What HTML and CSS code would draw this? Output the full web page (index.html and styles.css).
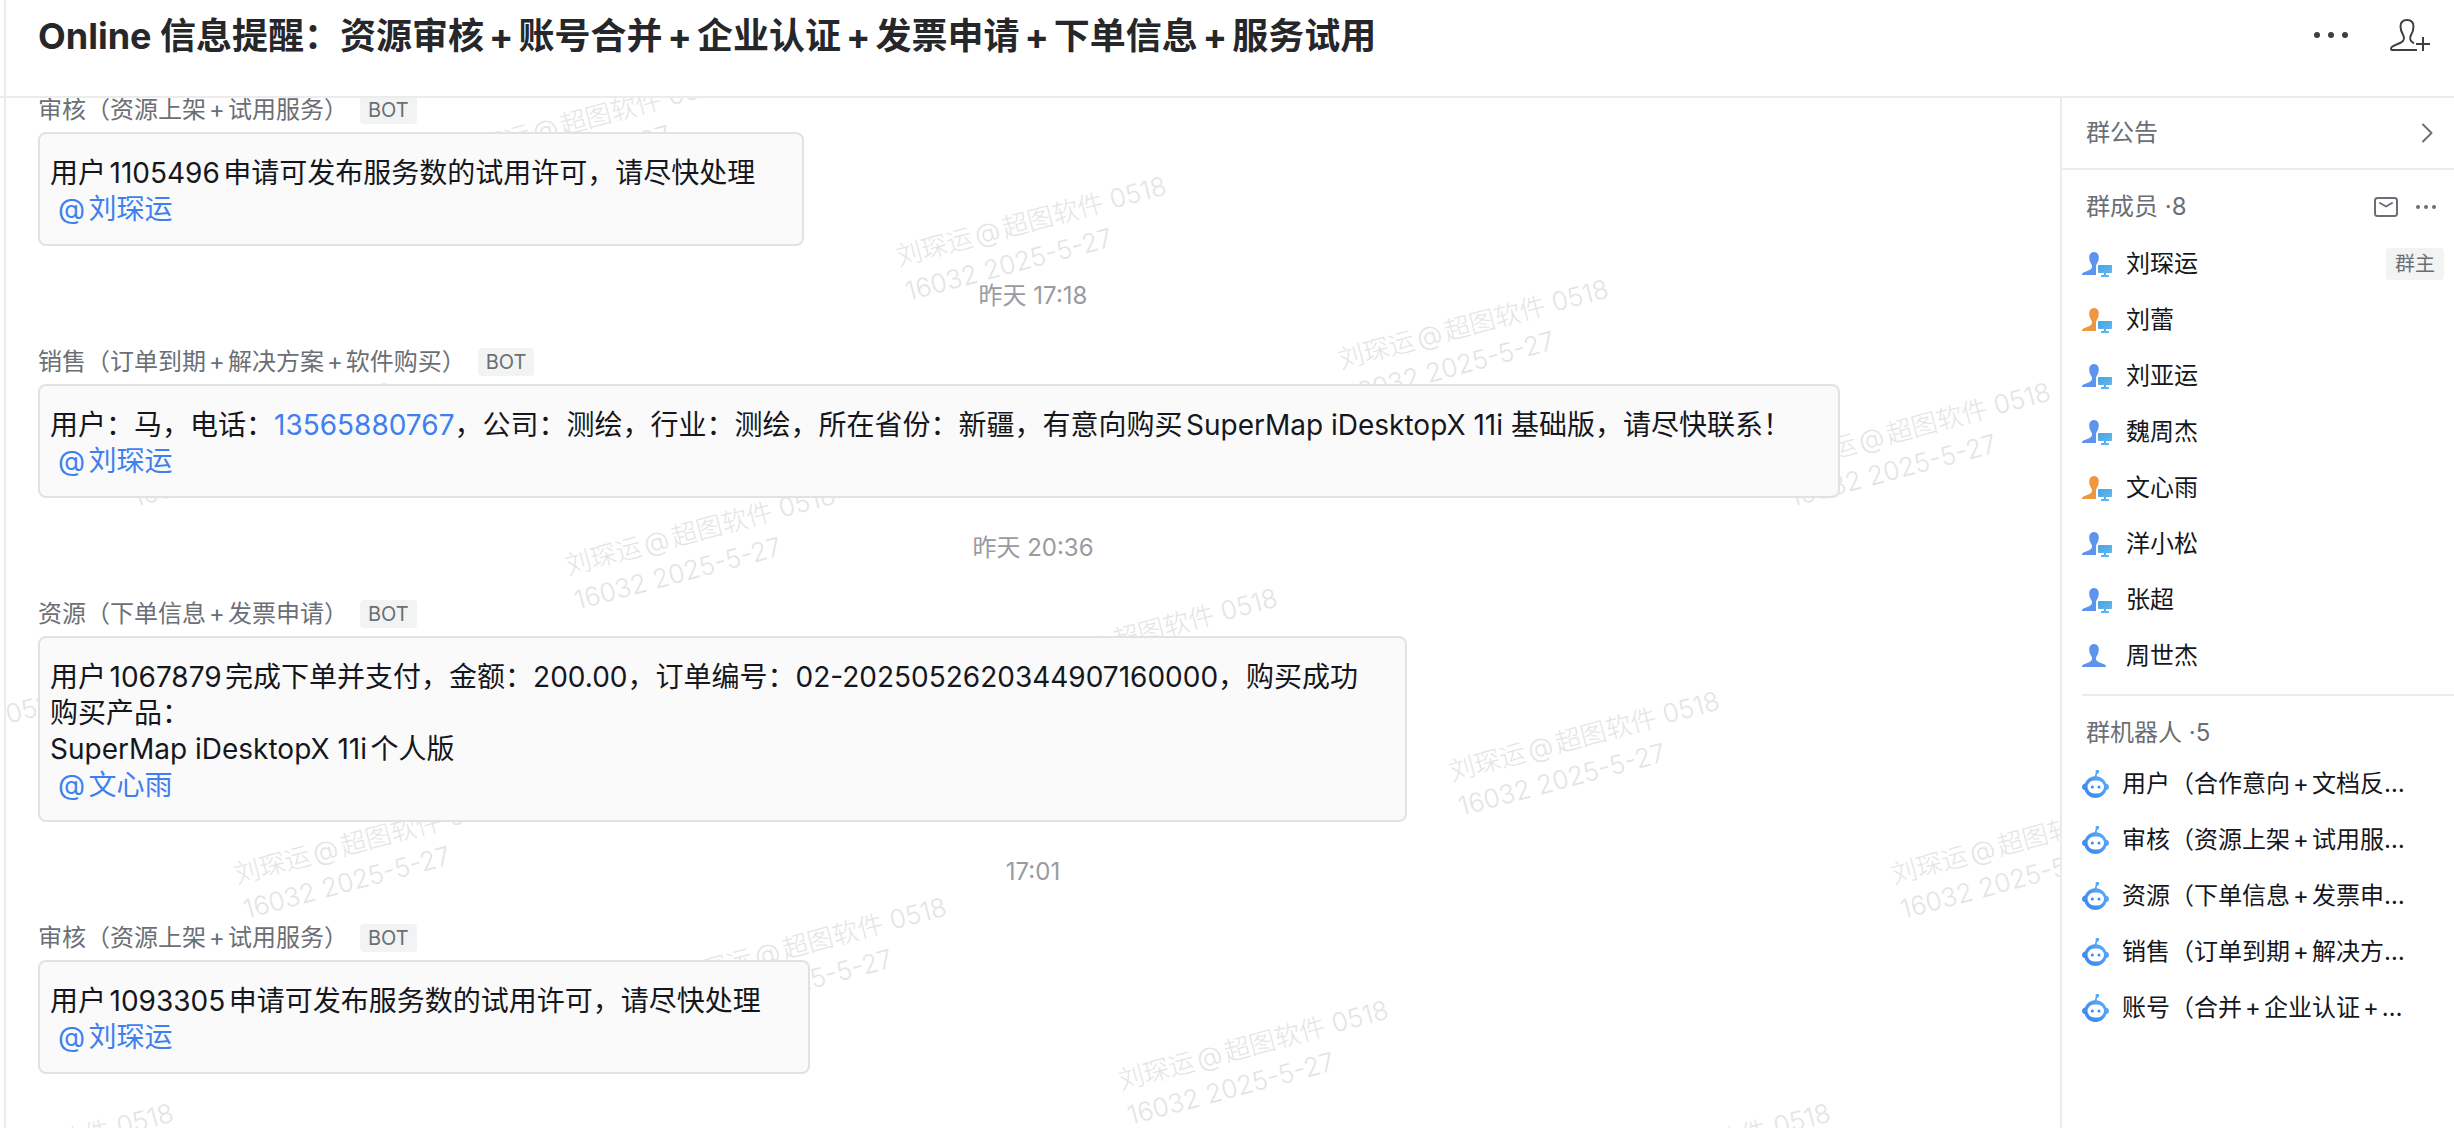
FILE: index.html
```html
<!DOCTYPE html>
<html lang="zh-CN">
<head>
  <meta charset="UTF-8">
  <title>Online 信息提醒</title>
  <link rel="stylesheet" href="styles.css">
</head>
<body>
  <!-- shared icons -->
  <svg class="defs" aria-hidden="true">
    <defs>
      <linearGradient id="botFill" x1="1" y1="0" x2="0" y2="1">
        <stop offset="0" stop-color="#66b6f6"/>
        <stop offset="1" stop-color="#3580ee"/>
      </linearGradient>
      <linearGradient id="pcFill" x1="0" y1="0" x2="1" y2="1">
        <stop offset="0" stop-color="#4aa3e3"/>
        <stop offset="1" stop-color="#63bbf3"/>
      </linearGradient>
    </defs>
    <symbol id="online" viewBox="0 0 30 25">
      <path fill="currentColor" d="M0 23C0 21.2.5 20.9 2 20.2L7 18.2C9.6 17 10.2 16 10 13.8C9.8 12.4 8.4 11.4 7.8 9C7 6 7 4.5 7.6 3C8.4 1 10 0 12 0s3.6 1 4.4 3c.6 1.5.6 3-.2 6C15.600 11.400 14 12.500 14 14V23Z"/>
      <path fill="url(#pcFill)" d="M17 13H29Q30 13 30 14V20Q30 21 29 21H24V23H27V25H19V23H22V21H17Q16 21 16 20V14Q16 13 17 13Z"/>
    </symbol>
    <symbol id="offline" viewBox="0 0 30 25">
      <path fill="currentColor" d="M0 23C0 21.200.5 20.900 2 20.200L7 18.200C9.600 17 10.200 16 10 13.800C9.800 12.400 8.400 11.400 7.800 9C7 6 7 4.500 7.600 3C8.400 1 10 0 12 0s3.600 1 4.400 3c.6 1.500.6 3-.2 6C15.600 11.400 14.200 12.400 14 13.800C13.800 16 14.400 17 17 18.200L22 20.200C23.500 20.900 24 21.200 24 23Z"/>
    </symbol>
    <symbol id="bot" viewBox="0 0 27 28">
      <path fill="url(#botFill)" d="M12.600 6.200L13.900 2.600A1.800 1.800 0 1 1 15.500 3.400L14.500 6.300C19 6.700 22.700 9.500 24 13.600C26 14.200 27 15.500 27 17S26 19.800 24.300 20.300C22.600 25 18.500 28 13.500 28S4.400 25 2.700 20.300C1 19.800 0 18.500 0 17S1 14.200 3 13.600C4.400 9.500 8 6.700 12.600 6.200Z"/>
      <rect x="5.500" y="10.500" width="16.500" height="13" rx="6.500" fill="#fff"/>
      <circle cx="10.300" cy="17" r="1.500" fill="#3d8bf0"/>
      <circle cx="17" cy="17" r="1.500" fill="#3d8bf0"/>
    </symbol>
  </svg>

  <div class="app">
    <header class="topbar">
      <h1 class="title">Online 信息提醒：资源审核<i>+</i>账号合并<i>+</i>企业认证<i>+</i>发票申请<i>+</i>下单信息<i>+</i>服务试用</h1>
      <div class="tools">
        <button class="icon-btn" aria-label="更多">
          <svg width="34" height="6" viewBox="0 0 34 6" fill="#3c3f44"><circle cx="3" cy="3" r="3"/><circle cx="17" cy="3" r="3"/><circle cx="31" cy="3" r="3"/></svg>
        </button>
        <button class="icon-btn" aria-label="添加成员">
          <svg width="40" height="32" viewBox="0 0 40 32" fill="none" stroke="#3c3f44" stroke-width="2">
            <path d="M24 24.300C20 22.500 19.300 19.500 21 16C22.700 13.200 23.500 10.500 23.500 7.500C23.500 3.500 21 1 17 1S10.500 3.500 10.500 7.500C10.500 10.500 11.500 13 12.900 15.500C15 19.500 14.500 21.500 11 23.500L3 27.200C1.500 28 1 28.800 1 30C1 31 1.200 31 2 31H27"/>
            <path d="M33 18V32M26 25H40"/>
          </svg>
        </button>
      </div>
    </header>

    <div class="body">
      <main class="chat">
        <div class="marks" aria-hidden="true">
          <div class="mark" style="left:442px;top:39px">刘琛运@超图软件 0518<br>16032 2025-5-27</div>
          <div class="mark" style="left:884px;top:142px">刘琛运@超图软件 0518<br>16032 2025-5-27</div>
          <div class="mark" style="left:1326px;top:245px">刘琛运@超图软件 0518<br>16032 2025-5-27</div>
          <div class="mark" style="left:1768px;top:348px">刘琛运@超图软件 0518<br>16032 2025-5-27</div>
          <div class="mark" style="left:111px;top:348px">刘琛运@超图软件 0518<br>16032 2025-5-27</div>
          <div class="mark" style="left:553px;top:451px">刘琛运@超图软件 0518<br>16032 2025-5-27</div>
          <div class="mark" style="left:995px;top:554px">刘琛运@超图软件 0518<br>16032 2025-5-27</div>
          <div class="mark" style="left:1437px;top:657px">刘琛运@超图软件 0518<br>16032 2025-5-27</div>
          <div class="mark" style="left:1879px;top:760px">刘琛运@超图软件 0518<br>16032 2025-5-27</div>
          <div class="mark" style="left:-220px;top:657px">刘琛运@超图软件 0518<br>16032 2025-5-27</div>
          <div class="mark" style="left:222px;top:760px">刘琛运@超图软件 0518<br>16032 2025-5-27</div>
          <div class="mark" style="left:664px;top:863px">刘琛运@超图软件 0518<br>16032 2025-5-27</div>
          <div class="mark" style="left:1106px;top:966px">刘琛运@超图软件 0518<br>16032 2025-5-27</div>
          <div class="mark" style="left:-109px;top:1069px">刘琛运@超图软件 0518<br>16032 2025-5-27</div>
          <div class="mark" style="left:1548px;top:1069px">刘琛运@超图软件 0518<br>16032 2025-5-27</div>
        </div>

        <article class="msg">
          <div class="sender"><span>审核（资源上架<i>+</i>试用服务）</span><span class="tag">BOT</span></div>
          <div class="bubble">
            <p>用户1105496申请可发布服务数的试用许可，请尽快处理</p>
            <p class="at"><a href="#">@刘琛运</a></p>
          </div>
        </article>

        <time class="time">昨天 17:18</time>

        <article class="msg">
          <div class="sender"><span>销售（订单到期<i>+</i>解决方案<i>+</i>软件购买）</span><span class="tag">BOT</span></div>
          <div class="bubble">
            <p>用户：马，电话：<a href="#">13565880767</a>，公司：测绘，行业：测绘，所在省份：新疆，有意向购买SuperMap iDesktopX 11i 基础版，请尽快联系！</p>
            <p class="at"><a href="#">@刘琛运</a></p>
          </div>
        </article>

        <time class="time">昨天 20:36</time>

        <article class="msg">
          <div class="sender"><span>资源（下单信息<i>+</i>发票申请）</span><span class="tag">BOT</span></div>
          <div class="bubble">
            <p>用户1067879完成下单并支付，金额：200.00，订单编号：02-2025052620344907160000，购买成功</p>
            <p>购买产品：</p>
            <p>SuperMap iDesktopX 11i个人版</p>
            <p class="at"><a href="#">@文心雨</a></p>
          </div>
        </article>

        <time class="time">17:01</time>

        <article class="msg">
          <div class="sender"><span>审核（资源上架<i>+</i>试用服务）</span><span class="tag">BOT</span></div>
          <div class="bubble">
            <p>用户1093305申请可发布服务数的试用许可，请尽快处理</p>
            <p class="at"><a href="#">@刘琛运</a></p>
          </div>
        </article>
      </main>

      <aside class="side">
        <button class="notice">
          <span>群公告</span>
          <svg width="12" height="20" viewBox="0 0 12 20" fill="none" stroke="#6b6f75" stroke-width="2" stroke-linecap="round" stroke-linejoin="round"><path d="M2 1.500L10.500 10L2 18.500"/></svg>
        </button>

        <section class="group members">
          <div class="group-head">
            <h2>群成员 ·8</h2>
            <div class="group-tools">
              <button class="icon-btn" aria-label="邮件">
                <svg width="24" height="20" viewBox="0 0 24 20" fill="none" stroke="#6b6f75" stroke-width="2" stroke-linecap="round" stroke-linejoin="round"><rect x="1" y="1" width="22" height="18" rx="2.500"/><path d="M6 6L12 9.500L18 6"/></svg>
              </button>
              <button class="icon-btn" aria-label="更多">
                <svg width="20" height="4" viewBox="0 0 20 4" fill="#6b6f75"><circle cx="2" cy="2" r="2"/><circle cx="10" cy="2" r="2"/><circle cx="18" cy="2" r="2"/></svg>
              </button>
            </div>
          </div>
          <ul>
            <li><svg class="face"><use href="#online"/></svg><span>刘琛运</span><span class="owner">群主</span></li>
            <li><svg class="face female"><use href="#online"/></svg><span>刘蕾</span></li>
            <li><svg class="face"><use href="#online"/></svg><span>刘亚运</span></li>
            <li><svg class="face"><use href="#online"/></svg><span>魏周杰</span></li>
            <li><svg class="face female"><use href="#online"/></svg><span>文心雨</span></li>
            <li><svg class="face"><use href="#online"/></svg><span>洋小松</span></li>
            <li><svg class="face"><use href="#online"/></svg><span>张超</span></li>
            <li><svg class="face"><use href="#offline"/></svg><span>周世杰</span></li>
          </ul>
        </section>

        <section class="group bots">
          <div class="group-head">
            <h2>群机器人 ·5</h2>
          </div>
          <ul>
            <li><svg class="bot"><use href="#bot"/></svg><span>用户（合作意向<i>+</i>文档反…</span></li>
            <li><svg class="bot"><use href="#bot"/></svg><span>审核（资源上架<i>+</i>试用服…</span></li>
            <li><svg class="bot"><use href="#bot"/></svg><span>资源（下单信息<i>+</i>发票申…</span></li>
            <li><svg class="bot"><use href="#bot"/></svg><span>销售（订单到期<i>+</i>解决方…</span></li>
            <li><svg class="bot"><use href="#bot"/></svg><span>账号（合并<i>+</i>企业认证<i>+</i>…</span></li>
          </ul>
        </section>
      </aside>
    </div>
  </div>
</body>
</html>
```

FILE: styles.css
```css
* {
  box-sizing: border-box;
}
html, body {
  margin: 0;
  height: 100%;
  overflow: hidden;
  background: #fff;
  font-family: Inter, "Noto Sans CJK SC", sans-serif;
  color: #15171c;
  text-autospace: normal;
}
h1, h2, p, ul {
  margin: 0;
  padding: 0;
  font-weight: normal;
}
ul {
  list-style: none;
}
a {
  color: #3f7ff0;
  text-decoration: none;
}
/* plus sign between names */
i {
  margin: 0 3px;
  font-style: normal;
}
button {
  padding: 0;
  border: 0;
  background: none;
  font: inherit;
  color: inherit;
  cursor: pointer;
}
svg {
  display: block;
  flex: none;
}
.defs {
  position: absolute;
  width: 0;
  height: 0;
}
.app {
  display: flex;
  flex-direction: column;
  height: 100vh;
}

/* header */
.topbar {
  display: flex;
  justify-content: space-between;
  align-items: flex-start;
  flex: none;
  height: 98px;
  padding: 8px 24px 0 38px;
  border-bottom: 2px solid #ececec;
  background: linear-gradient(#ececec, #ececec) 4px 0 / 2px 100% no-repeat;
}
.title {
  font-size: 36px;
  line-height: 56px;
  font-weight: 700;
  color: #26272a;
  white-space: nowrap;
}
.title i {
  margin: 0 5px;
}
.tools {
  display: flex;
  align-items: center;
  gap: 42px;
  height: 54px;
}

.body {
  display: flex;
  flex: 1;
  min-height: 0;
  padding-left: 4px;
}

/* chat */
.chat {
  position: relative;
  display: flex;
  flex: 1;
  flex-direction: column;
  justify-content: flex-end;
  min-width: 0;
  overflow: hidden;
  padding: 0 32px 54px;
  border-left: 2px solid #ececec;
}
.marks {
  position: absolute;
  inset: 0 0 0 2px;
}
.mark {
  position: absolute;
  transform: rotate(-15deg);
  transform-origin: 0 0;
  font-size: 26px;
  line-height: 36px;
  font-weight: 300;
  color: #e4e4e6;
  white-space: nowrap;
}
.msg {
  position: relative;
  display: flex;
  flex-direction: column;
  align-items: flex-start;
  gap: 8px;
}
.sender {
  display: flex;
  align-items: center;
  gap: 12px;
  height: 28px;
  font-size: 24px;
  line-height: 28px;
  color: #6b6f75;
}
.tag {
  padding: 0 8px;
  border-radius: 4px;
  background: #f2f4f4;
  font-size: 20px;
}
.bubble {
  padding: 21px 47px 17px 10px;
  border: 2px solid #e2e2e2;
  border-radius: 8px;
  background: #fafafa;
  font-size: 28px;
  line-height: 36px;
}
.at {
  padding-left: 8px;
}
.time {
  position: relative;
  padding: 33px 0 35px;
  text-align: center;
  font-size: 24px;
  line-height: 34px;
  color: #999b9f;
}

/* side panel */
.side {
  flex: none;
  width: 394px;
  border-left: 2px solid #ececec;
  background: #fff;
  font-size: 24px;
  line-height: 32px;
}
.notice {
  display: flex;
  justify-content: space-between;
  align-items: center;
  width: 100%;
  height: 72px;
  padding: 0 21px 0 24px;
  border-bottom: 2px solid #ececec;
  color: #6b6f75;
}
.group {
  padding-top: 14px;
}
.group-head {
  display: flex;
  justify-content: space-between;
  align-items: center;
  height: 46px;
  padding: 0 18px 0 24px;
}
.members .group-head {
  margin-bottom: 6px;
}
.group-head h2 {
  font-size: 24px;
  color: #6b6f75;
}
.group-tools {
  display: flex;
  align-items: center;
  gap: 18px;
}
.group li {
  display: flex;
  align-items: center;
  height: 56px;
  padding: 0 10px 0 20px;
  white-space: nowrap;
}
.face {
  width: 30px;
  height: 25px;
  margin-right: 14px;
  color: #5e93ee;
}
.female {
  color: #ee9640;
}
.owner {
  margin-left: auto;
  padding: 0 9px;
  border-radius: 4px;
  background: #f2f4f4;
  font-size: 20px;
  color: #6b6f75;
}
.bots {
  margin: 10px 0 0 20px;
  border-top: 2px solid #ececec;
}
.bots .group-head {
  padding-left: 4px;
}
.bots li {
  padding-left: 0;
}
.bot {
  width: 27px;
  height: 28px;
  margin-right: 13px;
}
```
